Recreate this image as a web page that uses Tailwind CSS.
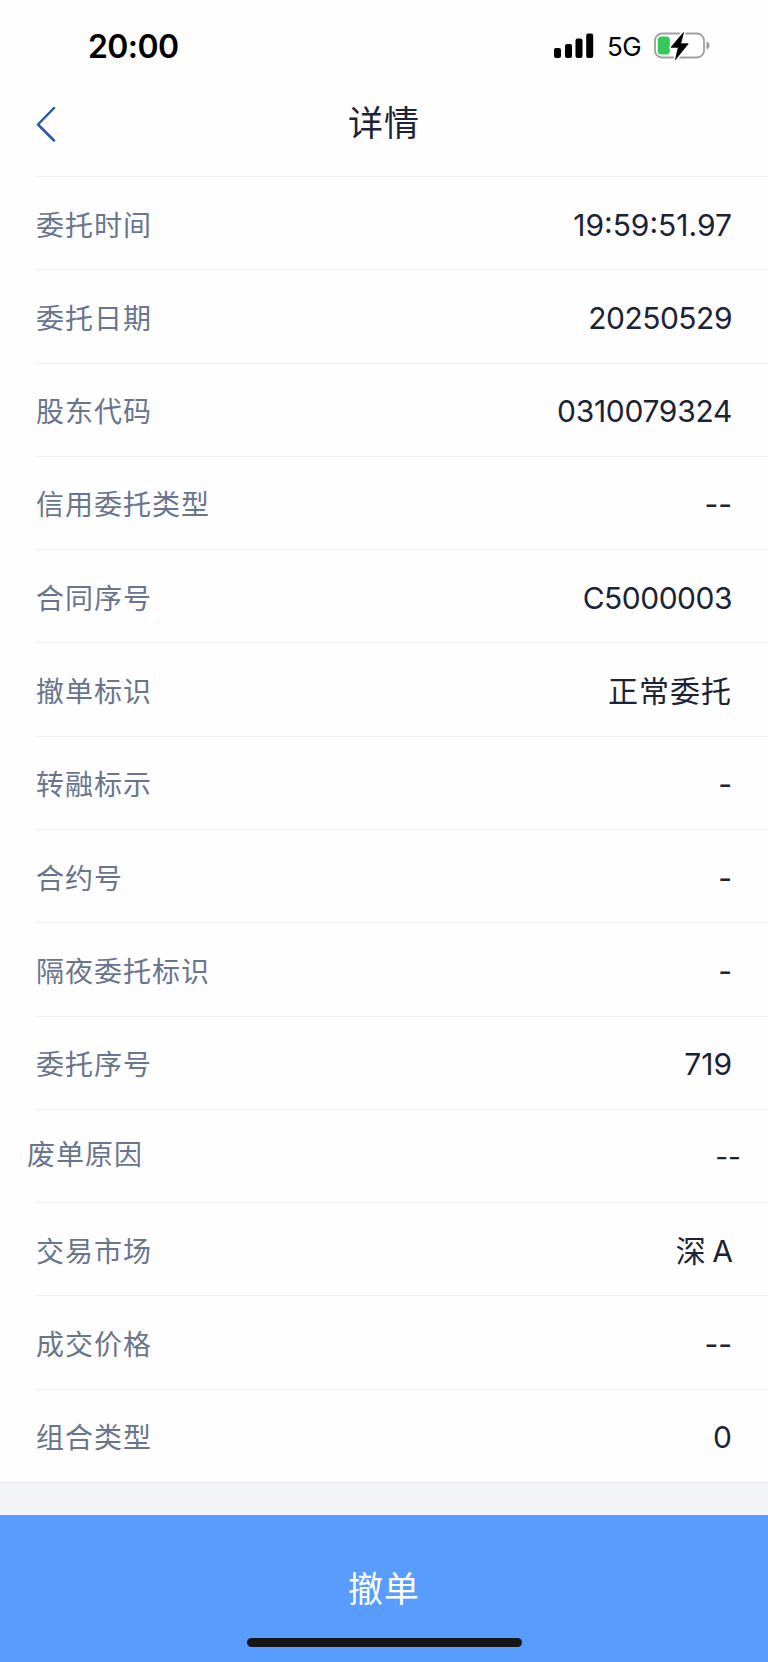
<!DOCTYPE html>
<html lang="zh-CN">
<head>
  <meta charset="UTF-8" />
  <meta name="viewport" content="width=device-width, initial-scale=1.0" />
  <title>详情</title>
  <script src="https://cdn.jsdelivr.net/npm/@tailwindcss/browser@4"></script>
</head>
<body class="bg-[#fefefe] font-[Inter,'Noto_Sans_CJK_SC',sans-serif] text-[#1c2335]">
  <div class="w-[768px] h-[1662px] flex flex-col overflow-hidden">

    <!-- Barra de estado -->
    <div class="h-[82px] shrink-0 flex items-center justify-between pl-[88px] pr-[57px] pt-[10px] text-black">
      <span class="text-[32px] leading-none font-semibold tracking-[-0.6px] pt-[2px]">20:00</span>
      <div class="flex items-center">
        <svg class="w-[40px] h-[26px]" viewBox="0 0 40 26">
          <rect x="0" y="15" width="7" height="10" rx="2" />
          <rect x="11" y="11" width="7" height="14" rx="2" />
          <rect x="21.500" y="5.500" width="7" height="19.500" rx="2" />
          <rect x="32.200" y="0.500" width="7" height="24.500" rx="2" />
        </svg>
        <span class="ml-[13px] w-[36px] text-[26px] leading-none tracking-tight pt-[2px]">5G</span>
        <svg class="ml-[10px] w-[58px] h-[30px]" viewBox="0 0 58 30">
          <rect x="2" y="2.500" width="49" height="24" rx="7" fill="none" stroke="#a0a0a0" stroke-width="1.800" />
          <path d="M53.500 10.500v8c1.800-.6 3-2.200 3-4s-1.200-3.400-3-4z" fill="#999" />
          <rect x="4.800" y="5.500" width="12" height="18" rx="3.500" fill="#34c759" />
          <path d="M30.500 1.500L18 16.300h7.300L22.500 28.500 35.200 12.800h-7.500z" fill="#000" stroke="#fefefe" stroke-width="4" stroke-linejoin="round" />
          <path d="M30.500 1.500L18 16.300h7.300L22.500 28.500 35.200 12.800h-7.500z" fill="#000" stroke="#000" stroke-width="0.800" stroke-linejoin="round" />
        </svg>
      </div>
    </div>

    <!-- Cabecera -->
    <header class="h-[94px] shrink-0 grid grid-cols-3 items-center px-9">
      <svg class="w-[20px] h-[36px] mt-[-11px]" viewBox="0 0 20 36" fill="none" stroke="#2b58a3" stroke-width="2.500" stroke-linecap="round" stroke-linejoin="round">
        <path d="M18 2L2 18.500L18 34.500" />
      </svg>
      <h1 class="text-center text-[35px] leading-none tracking-[1px] mt-[-12px]">详情</h1>
    </header>

    <!-- Filas del detalle -->
    <main id="lista" class="h-[1306px] shrink-0 grid grid-rows-14"></main>

    <div class="h-[33px] shrink-0 bg-[#f2f4f7] border-t border-[#e8eaec]"></div>

    <!-- Botón inferior -->
    <button class="flex-1 relative bg-[#589dfd] text-white text-[35px] leading-none tracking-[1px] pt-[2px]">
      撤单
      <span class="absolute bottom-[15px] left-[247px] w-[275px] h-[9px] rounded-full bg-[#161616]"></span>
    </button>
  </div>

  <script>
    const lista = document.getElementById('lista');

    const campos = [
      ['委托时间', '19:59:51.97'],
      ['委托日期', '20250529', 'tracking-[-0.5px]'],
      ['股东代码', '0310079324', 'tracking-[-0.3px]'],
      ['信用委托类型', '--'],
      ['合同序号', 'C5000003', 'tracking-[-0.5px]'],
      ['撤单标识', '正常委托', 'tracking-[1px]'],
      ['转融标示', '-'],
      ['合约号', '-'],
      ['隔夜委托标识', '-'],
      ['委托序号', '719'],
      ['废单原因', '--', 'pt-[5px]', true],
      ['交易市场', '深 A', 'tracking-[-1px] text-[29px]'],
      ['成交价格', '--'],
      ['组合类型', '0'],
    ];

    campos.forEach(([nombre, valor, clase = '', ancha]) => {
      const div = document.createElement('div');
      div.className = 'ml-9 border-t border-[#efefef]';
      div.innerHTML = `
        <div class="h-full flex items-center justify-between leading-none ${ancha ? '-ml-[9px] pr-[27px] pb-[2px]' : 'pr-9 pt-[3px]'}">
          <span class="text-[28px] tracking-[1px] text-[#69758d] ${ancha ? '' : 'pt-[2px]'}">${nombre}</span>
          <span class="${ancha ? 'text-[28px]' : 'text-[30px]'} ${clase}">${valor}</span>
        </div>
      `;
      lista.appendChild(div);
    });
  </script>
</body>
</html>
